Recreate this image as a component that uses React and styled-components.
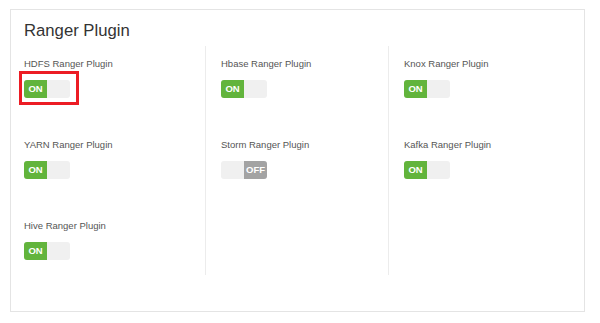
import React from "react";
import styled, { createGlobalStyle } from "styled-components";

const Global = createGlobalStyle`
  html, body { margin: 0; padding: 0; background: #fff; }
  body { font-family: "Liberation Sans", Arial, sans-serif; }
`;

const Page = styled.div`
  padding: 9px 15px 0 10px;
`;

const Panel = styled.section`
  box-sizing: border-box;
  height: 303px;
  border: 1px solid #e4e4e4;
  padding: 11px 0 0 13px;
`;

const Title = styled.h2`
  margin: 0;
  font-size: 16.7px;
  line-height: 20px;
  font-weight: 400;
  color: #333;
`;

const Grid = styled.div`
  margin-top: 5px;
  display: grid;
  grid-template-columns: 181px 183px 183px;
`;

const Column = styled.div`
  display: flex;
  flex-direction: column;
  gap: 41px;
  padding: 12px 0 15px ${(p) => (p.$first ? "0" : "15px")};
  border-left: ${(p) => (p.$first ? "none" : "1px solid #ececec")};
`;

const Item = styled.div`
  display: flex;
  flex-direction: column;
  gap: 10px;
`;

const Label = styled.div`
  font-size: 9.5px;
  line-height: 12px;
  color: #555;
`;

const Toggle = styled.div`
  position: relative;
  display: flex;
  justify-content: ${(p) => (p.$on ? "flex-start" : "flex-end")};
  width: 46px;
  height: 18px;
  border-radius: 3px;
  background: #f0f0f0;
`;

const Knob = styled.div`
  width: 23px;
  height: 18px;
  border-radius: ${(p) => (p.$on ? "3px 0 0 3px" : "0 3px 3px 0")};
  background: ${(p) => (p.$on ? "#62b43c" : "#a3a3a3")};
  color: #fff;
  font-size: 9.5px;
  font-weight: 700;
  line-height: 18px;
  text-align: center;
`;

const Highlight = styled.div`
  position: absolute;
  left: -5px;
  top: -9px;
  width: 60px;
  height: 34px;
  box-sizing: border-box;
  border: 3px solid #ec1c24;
`;

const columns = [
  [
    { name: "HDFS Ranger Plugin", on: true, hl: true },
    { name: "YARN Ranger Plugin", on: true },
    { name: "Hive Ranger Plugin", on: true },
  ],
  [
    { name: "Hbase Ranger Plugin", on: true },
    { name: "Storm Ranger Plugin", on: false },
  ],
  [
    { name: "Knox Ranger Plugin", on: true },
    { name: "Kafka Ranger Plugin", on: true },
  ],
];

export default function App() {
  return (
    <Page>
      <Global />
      <Panel>
        <Title>Ranger Plugin</Title>
        <Grid>
          {columns.map((col, i) => (
            <Column key={i} $first={i === 0}>
              {col.map((it) => (
                <Item key={it.name}>
                  <Label>{it.name}</Label>
                  <Toggle $on={it.on}>
                    <Knob $on={it.on}>{it.on ? "ON" : "OFF"}</Knob>
                    {it.hl && <Highlight />}
                  </Toggle>
                </Item>
              ))}
            </Column>
          ))}
        </Grid>
      </Panel>
    </Page>
  );
}
